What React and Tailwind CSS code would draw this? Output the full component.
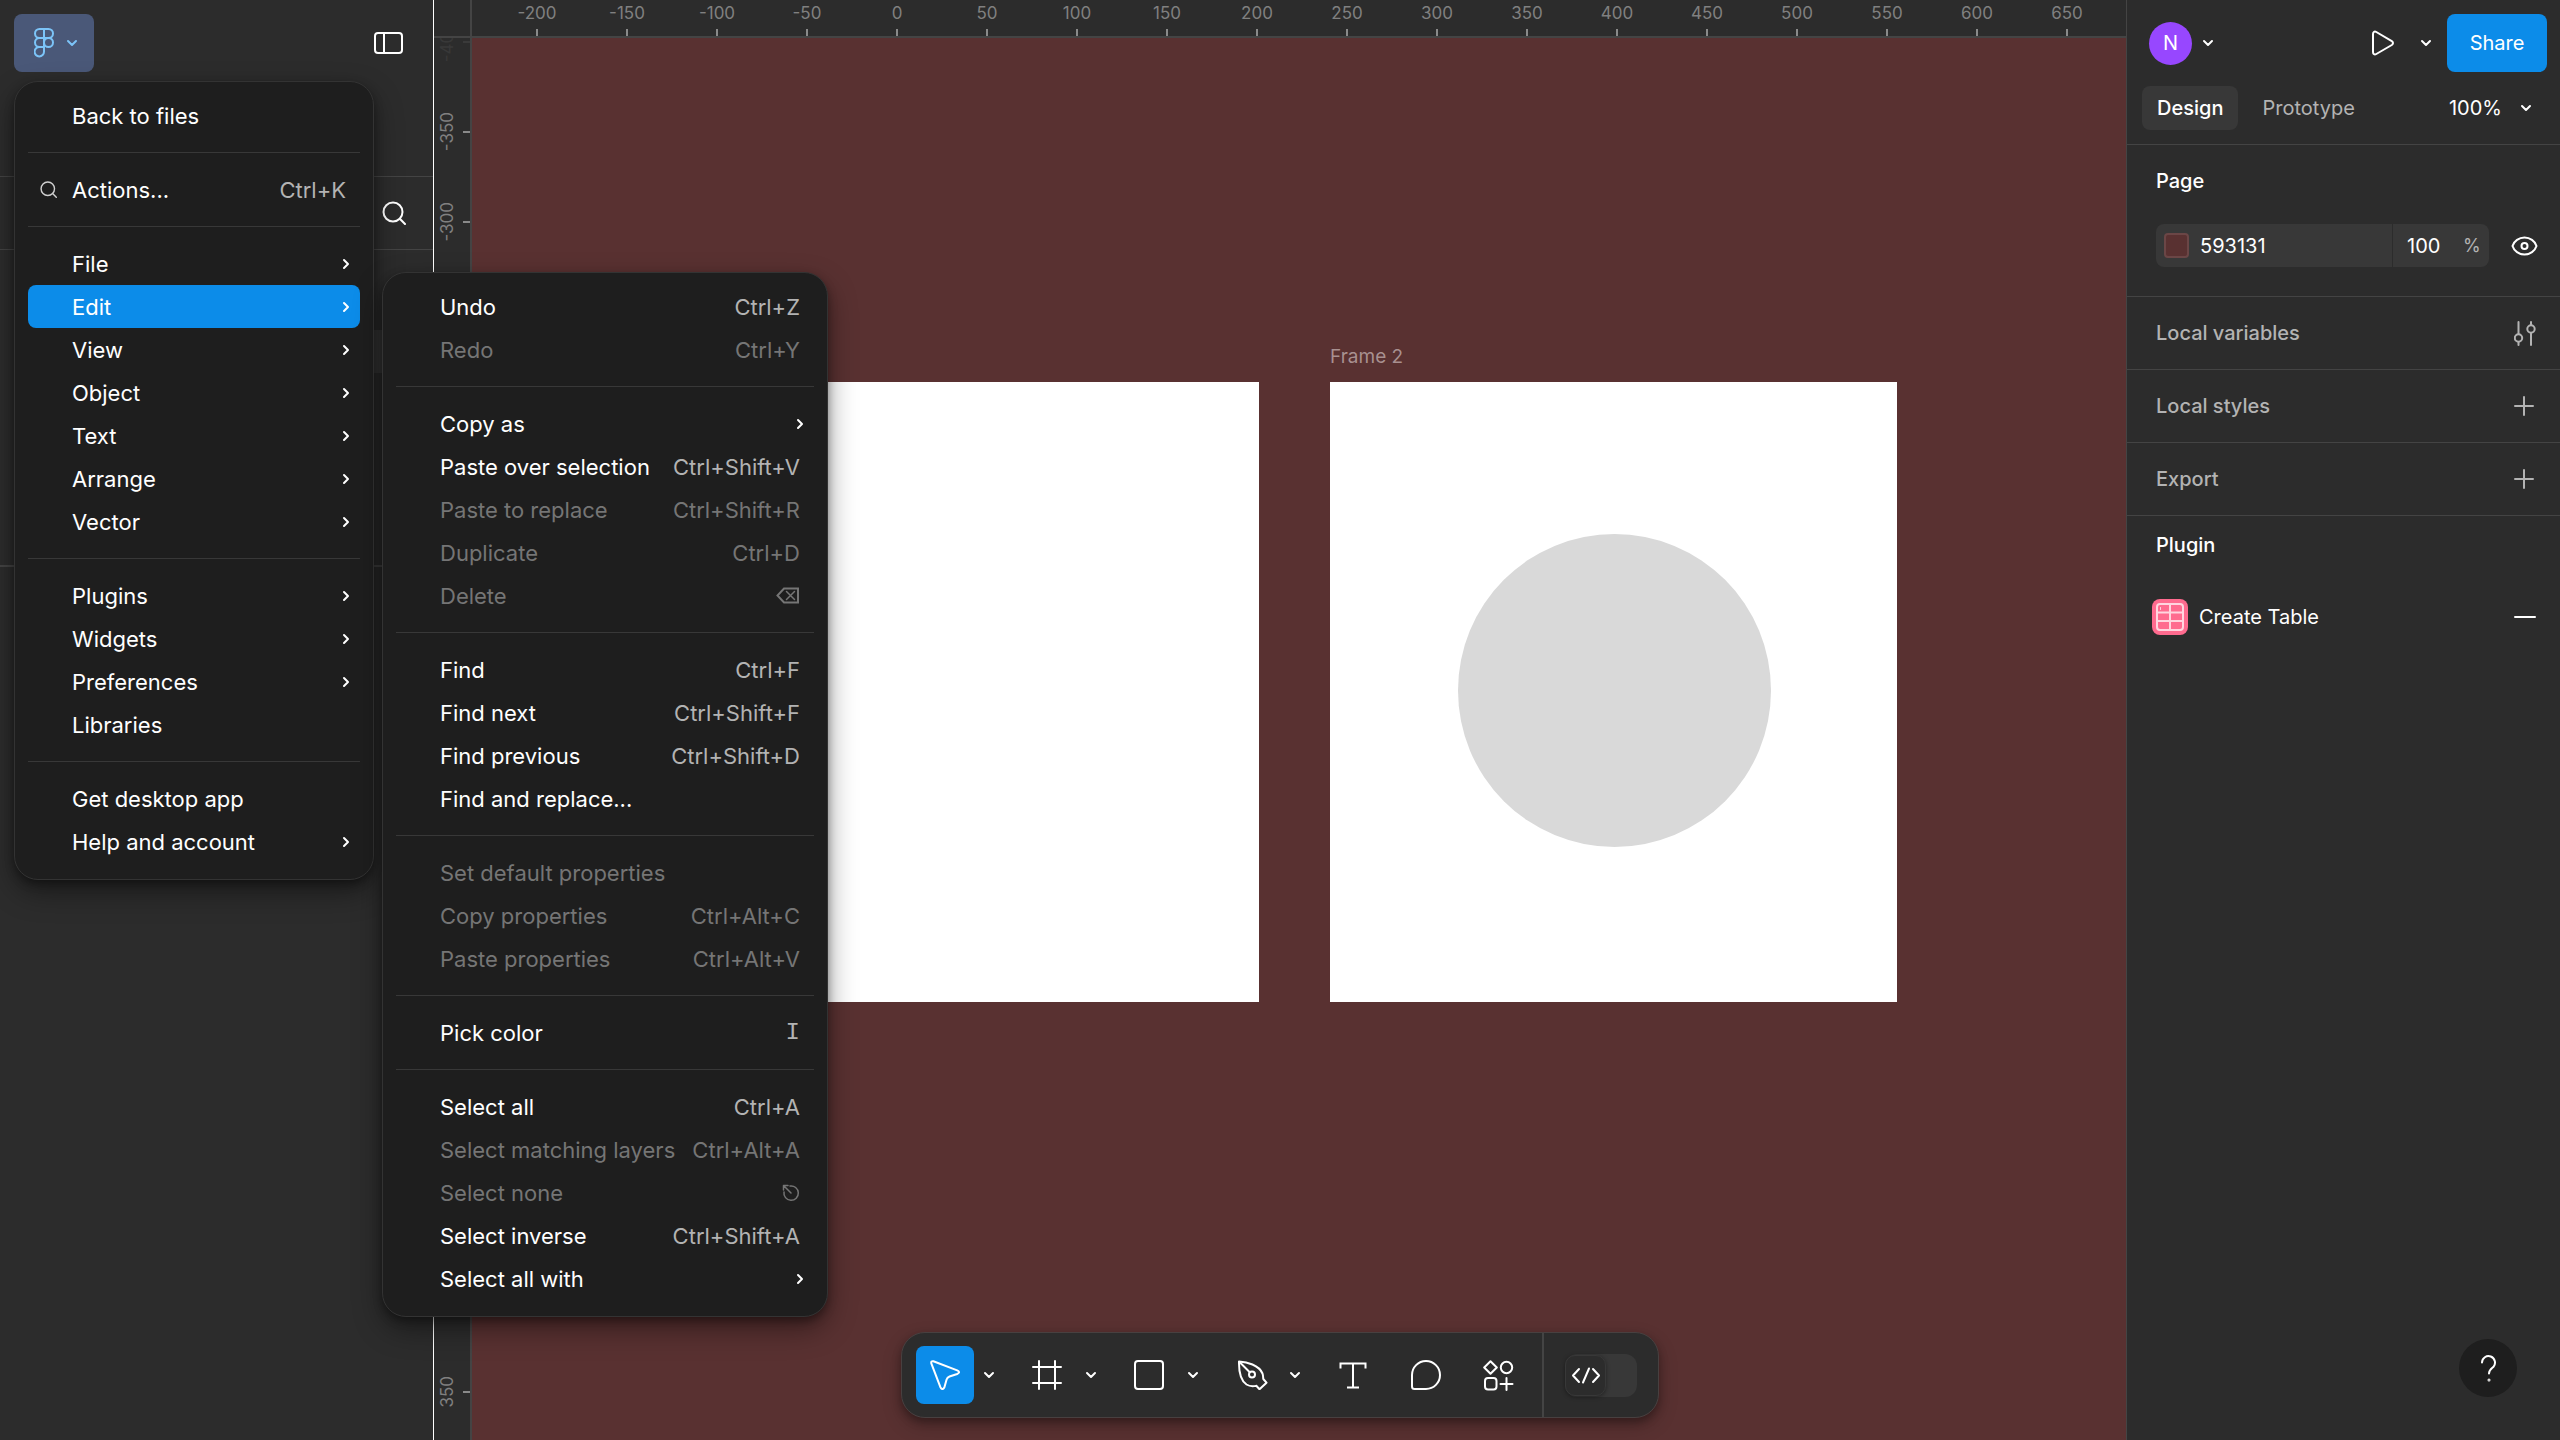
import React from 'react';

const Svg = ({ w, h, className = '', sw = 2, children }) => (
  <svg
    width={w}
    height={h}
    viewBox={`0 0 ${w} ${h}`}
    fill="none"
    stroke="currentColor"
    strokeWidth={sw}
    strokeLinecap="round"
    strokeLinejoin="round"
    aria-hidden="true"
    className={`shrink-0 ${className}`}
  >
    {children}
  </svg>
);

const ChevronDown = ({ className }) => (
  <Svg w={12} h={8} className={className}>
    <path d="M2 2l4 4 4-4" />
  </Svg>
);

const ChevronRight = () => (
  <Svg w={8} h={12}>
    <path d="M2 2l4 4-4 4" />
  </Svg>
);

const SearchIcon = ({ size }) => (
  <svg width={size} height={size} viewBox="0 0 24 24" fill="none" stroke="currentColor" strokeWidth="2" strokeLinecap="round" aria-hidden="true">
    <circle cx="11" cy="11" r="9.5" />
    <path d="M17.8 17.8L23 23" />
  </svg>
);

const BackspaceIcon = () => (
  <Svg w={24} h={17} sw={2}>
    <path d="M8 1.500h14v14H8L1.500 8.500z" strokeLinejoin="miter" />
    <path d="M10.500 4.500l8 8M18.500 4.500l-8 8" strokeWidth="1.500" />
  </Svg>
);

const EscapeIcon = () => (
  <Svg w={18} h={18} sw={1.5}>
    <path d="M8 2a7.200 7.200 0 1 1-6 6" />
    <path d="M9 9L1.500 1.500M1.500 6V1.500H6" />
  </Svg>
);

const FigmaIcon = () => (
  <Svg w={20} h={30} sw={2}>
    <path d="M10 1H5.500a4.500 4.500 0 0 0 0 9H10z" />
    <path d="M10 1h4.500a4.500 4.500 0 0 1 0 9H10z" />
    <path d="M10 10H5.500a4.500 4.500 0 0 0 0 9H10z" />
    <circle cx="14.500" cy="14.500" r="4.500" />
    <path d="M10 19H5.500A4.700 4.700 0 1 0 10 23.700z" />
  </Svg>
);

const mainMenu = [
  [{ label: 'Back to files' }],
  [{ label: 'Actions...', keys: 'Ctrl+K', icon: true }],
  [
    { label: 'File', sub: true },
    { label: 'Edit', sub: true, active: true },
    { label: 'View', sub: true },
    { label: 'Object', sub: true },
    { label: 'Text', sub: true },
    { label: 'Arrange', sub: true },
    { label: 'Vector', sub: true },
  ],
  [
    { label: 'Plugins', sub: true },
    { label: 'Widgets', sub: true },
    { label: 'Preferences', sub: true },
    { label: 'Libraries' },
  ],
  [{ label: 'Get desktop app' }, { label: 'Help and account', sub: true }],
];

const editMenu = [
  [{ label: 'Undo', keys: 'Ctrl+Z' }, { label: 'Redo', keys: 'Ctrl+Y', off: true }],
  [
    { label: 'Copy as', sub: true },
    { label: 'Paste over selection', keys: 'Ctrl+Shift+V' },
    { label: 'Paste to replace', keys: 'Ctrl+Shift+R', off: true },
    { label: 'Duplicate', keys: 'Ctrl+D', off: true },
    { label: 'Delete', keys: <BackspaceIcon />, off: true },
  ],
  [
    { label: 'Find', keys: 'Ctrl+F' },
    { label: 'Find next', keys: 'Ctrl+Shift+F' },
    { label: 'Find previous', keys: 'Ctrl+Shift+D' },
    { label: 'Find and replace...' },
  ],
  [
    { label: 'Set default properties', off: true },
    { label: 'Copy properties', keys: 'Ctrl+Alt+C', off: true },
    { label: 'Paste properties', keys: 'Ctrl+Alt+V', off: true },
  ],
  [{ label: 'Pick color', keys: <span className="font-['Liberation_Mono'] text-2xl">I</span> }],
  [
    { label: 'Select all', keys: 'Ctrl+A' },
    { label: 'Select matching layers', keys: 'Ctrl+Alt+A', off: true },
    { label: 'Select none', keys: <EscapeIcon />, off: true },
    { label: 'Select inverse', keys: 'Ctrl+Shift+A' },
    { label: 'Select all with', sub: true },
  ],
];

function MenuItem({ item }) {
  const tone = item.off ? 'text-[#757575]' : 'text-white';
  const keyTone = item.off ? 'text-[#757575]' : 'text-[#b3b3b3]';
  return (
    <button
      type="button"
      role="menuitem"
      disabled={item.off}
      className={`flex h-[43px] w-full items-center rounded-lg text-left whitespace-nowrap ${tone} ${item.active ? 'bg-[#0c8ce9]' : ''}`}
    >
      <span className="flex w-11 shrink-0 items-center pl-3 text-[#d0d0d0]">{item.icon && <SearchIcon size={17} />}</span>
      <span className="flex-1">{item.label}</span>
      {item.keys && <span className={`flex items-center pr-[14px] ${keyTone}`}>{item.keys}</span>}
      {item.sub && (
        <span className="pr-[10px]">
          <ChevronRight />
        </span>
      )}
    </button>
  );
}

function Menu({ groups, label, className }) {
  return (
    <div
      role="menu"
      aria-label={label}
      className={`absolute rounded-3xl border border-[#333] bg-[#1e1e1e] px-[13px] pt-3 pb-4 text-[22px] shadow-[0_4px_9px_rgba(0,0,0,0.35),0_12px_29px_rgba(0,0,0,0.4)] ${className}`}
    >
      {groups.map((group, i) => (
        <React.Fragment key={i}>
          {i > 0 && <hr className="my-[15px] border-[#383838]" />}
          {group.map((item) => (
            <MenuItem key={item.label} item={item} />
          ))}
        </React.Fragment>
      ))}
    </div>
  );
}

function LeftPanel() {
  return (
    <aside className="flex w-[434px] shrink-0 flex-col border-r border-white bg-[#2c2c2c]">
      <div className="flex h-[177px] items-start justify-between border-b border-[#444] pt-[14px] pr-[30px] pl-[14px]">
        <button type="button" aria-label="Main menu" className="flex h-[58px] w-20 items-center gap-3 rounded-lg bg-[#4a5878] pl-5 text-[#7cc4f8]">
          <FigmaIcon />
          <ChevronDown />
        </button>
        <button type="button" aria-label="Toggle sidebar" className="mt-[18px] text-white">
          <Svg w={29} h={22}>
            <rect x="1" y="1" width="27" height="20" rx="3" />
            <path d="M10 1v20" />
          </Svg>
        </button>
      </div>
      <div className="flex h-[73px] items-center justify-end border-b border-[#444] pr-[27px]">
        <button type="button" aria-label="Find" className="text-white">
          <SearchIcon size={24} />
        </button>
      </div>
      <div className="h-[317px] border-b-2 border-[#444] px-[14px] pt-20">
        <div className="h-[43px] rounded-lg bg-[#383838]" />
      </div>
    </aside>
  );
}

const xTicks = Array.from({ length: 18 }, (_, i) => i * 50 - 200);
const yTicks = Array.from({ length: 16 }, (_, i) => i * 50 - 400);

function Canvas() {
  return (
    <main className="flex min-w-0 flex-1 flex-col overflow-hidden text-[17px] leading-5 text-[#808080]">
      <div className="flex h-[38px] shrink-0 border-b-2 border-[#444] bg-[#2c2c2c]">
        <div className="w-[38px] shrink-0 border-r-2 border-[#444]" />
        <div className="flex min-w-0 flex-1 overflow-hidden pl-5">
          {xTicks.map((n) => (
            <div key={n} className="flex w-[90px] shrink-0 flex-col items-center justify-between pt-[3px]">
              <span>{n}</span>
              <span className="h-[7px] w-[2px] bg-[#8a8a8a]" />
            </div>
          ))}
        </div>
      </div>
      <div className="flex min-h-0 flex-1">
        <div className="w-[38px] shrink-0 overflow-hidden border-r-2 border-[#444] bg-[#2c2c2c]">
          <div className="-mt-[41px]">
            {yTicks.map((n) => (
              <div key={n} className={`flex h-[90px] items-center justify-between pl-[3px] ${n === -400 ? 'opacity-15' : ''}`}>
                <span className="rotate-180 [writing-mode:vertical-rl]">{n}</span>
                <span className="h-[2px] w-[7px] bg-[#8a8a8a]" />
              </div>
            ))}
          </div>
        </div>
        <div className="relative min-w-0 flex-1 overflow-hidden bg-[#593131]">
          <div className="absolute top-[344px] left-[220px] h-[620px] w-[567px] bg-white" />
          <div className="absolute top-[309px] left-[858px] text-[19px] leading-5 text-[#a89090]">Frame 2</div>
          <div className="absolute top-[344px] left-[858px] h-[620px] w-[567px] bg-white">
            <div className="absolute top-[152px] left-32 size-[313px] rounded-full bg-[#d9d9d9]" />
          </div>
        </div>
      </div>
    </main>
  );
}

const Plus = () => (
  <Svg w={20} h={20} sw={2}>
    <path d="M10 1v18M1 10h18" />
  </Svg>
);

const Sliders = () => (
  <Svg w={22} h={25} sw={2}>
    <path d="M4.500 1v12M4.500 21v3M17 1v3M17 12v12" />
    <circle cx="4.500" cy="17" r="3.700" />
    <circle cx="17" cy="8" r="3.700" />
  </Svg>
);

function SideRow({ label, action, pr, children }) {
  return (
    <div className={`flex h-[73px] items-center justify-between border-b border-[#444] pl-[29px] font-medium text-[#b3b3b3] ${pr}`}>
      <h2>{label}</h2>
      <button type="button" aria-label={action}>{children}</button>
    </div>
  );
}

function RightPanel() {
  return (
    <aside className="flex w-[434px] shrink-0 flex-col border-l border-[#444] bg-[#2c2c2c] text-white">
      <div className="flex h-[86px] items-center pr-[13px] pl-[22px]">
        <button type="button" aria-label="Account" className="flex items-center gap-[10px]">
          <span className="flex size-[43px] items-center justify-center rounded-full bg-[#9747ff]">N</span>
          <ChevronDown />
        </button>
        <button type="button" aria-label="Present" className="mr-[25px] ml-auto">
          <Svg w={24} h={26}>
            <path d="M2 4v18c0 2.300 1.600 3 3.300 2l15.500-9c1.600-1 1.600-2.800 0-3.800L5.300 2C3.600 1 2 1.700 2 4z" />
          </Svg>
        </button>
        <button type="button" aria-label="Present options" className="mr-[15px]">
          <ChevronDown />
        </button>
        <button type="button" className="h-[58px] w-[100px] rounded-lg bg-[#0c8ce9]">Share</button>
      </div>
      <div className="flex h-[59px] items-start border-b border-[#444] pr-7 pl-[15px]">
        <button type="button" className="h-11 rounded-lg bg-[#383838] px-[15px] font-medium">Design</button>
        <button type="button" className="h-11 px-6 text-[#b3b3b3]">Prototype</button>
        <button type="button" className="ml-auto flex h-11 items-center gap-[18px]">
          100%
          <ChevronDown />
        </button>
      </div>
      <section className="h-[152px] border-b border-[#444] pl-[29px]">
        <h2 className="flex h-[79px] items-center pb-[7px] font-medium">Page</h2>
        <div className="flex items-center">
          <div className="flex h-[43px] w-[333px] items-center rounded-lg bg-[#383838]">
            <span className="ml-2 size-[25px] shrink-0 rounded border-2 border-[#6b4646] bg-[#593131]" />
            <input aria-label="Page color" defaultValue="593131" className="ml-[11px] w-48 min-w-0 bg-transparent outline-none" />
            <span className="h-[43px] w-px shrink-0 bg-[#2c2c2c]" />
            <input aria-label="Page opacity" defaultValue="100" className="ml-[14px] w-14 min-w-0 bg-transparent outline-none" />
            <span className="text-lg text-[#b3b3b3]">%</span>
          </div>
          <button type="button" aria-label="Toggle visibility" className="ml-[22px]">
            <Svg w={27} h={20}>
              <path d="M1.500 10C3 5 8 1.500 13.500 1.500S24 5 25.500 10C24 15 19 18.500 13.500 18.500S3 15 1.500 10z" />
              <circle cx="13.500" cy="10" r="3" />
            </Svg>
          </button>
        </div>
      </section>
      <SideRow label="Local variables" action="Open variables" pr="pr-6">
        <Sliders />
      </SideRow>
      <SideRow label="Local styles" action="Create style" pr="pr-[26px]">
        <Plus />
      </SideRow>
      <SideRow label="Export" action="Add export setting" pr="pr-[26px]">
        <Plus />
      </SideRow>
      <h2 className="flex h-[58px] items-center pl-[29px] font-medium">Plugin</h2>
      <div className="flex h-[86px] items-center pr-[23px] pl-[25px]">
        <Svg w={36} h={36} sw={2} className="text-[#ffd5df]">
          <rect width="36" height="36" rx="8" fill="#ff6b8f" stroke="none" />
          <rect x="5" y="5" width="26" height="26" rx="3" />
          <path d="M18 5v26M5 13.500h26M5 22h26" />
          <path d="M8.500 8.500v2" strokeWidth="1" />
        </Svg>
        <span className="ml-[11px] flex-1">Create Table</span>
        <button type="button" aria-label="Remove plugin">
          <Svg w={24} h={4}>
            <path d="M2 2h20" />
          </Svg>
        </button>
      </div>
    </aside>
  );
}

const tools = [
  {
    name: 'Move',
    active: true,
    menu: true,
    icon: (
      <Svg w={30} h={30}>
        <path d="M3.400 1.300L27.200 10.400Q31 12.300 27.200 14L19.500 16.500Q17.200 17.300 16.600 19.500L14.400 27.200Q12.500 31 10.400 27.200L1.300 3.400Q.8.800 3.400 1.300z" />
      </Svg>
    ),
  },
  {
    name: 'Frame',
    menu: true,
    icon: (
      <Svg w={30} h={30}>
        <path d="M7 1v28M23 1v28M1 7h28M1 23h28" />
      </Svg>
    ),
  },
  {
    name: 'Rectangle',
    menu: true,
    icon: (
      <Svg w={30} h={30}>
        <rect x="1" y="1" width="28" height="28" rx="3" />
      </Svg>
    ),
  },
  {
    name: 'Pen',
    menu: true,
    icon: (
      <Svg w={34} h={30}>
        <path d="M5 1.500C13 2 25 5 28.500 13.500C29.500 16.500 29 18 29.300 19L32.500 22.700L25.500 29.200L22.300 25.800C20 26.200 16.500 27 12.500 24.500C7.500 21 4.800 12 5 1.500z" />
        <path d="M5.500 2L15.500 12" />
        <circle cx="18" cy="14.500" r="3" />
      </Svg>
    ),
  },
  {
    name: 'Text',
    icon: (
      <Svg w={28} h={27}>
        <path d="M1.500 6.500V1.500h25v5M14 1.500v24M8 25.500h12" strokeLinecap="butt" strokeLinejoin="miter" />
      </Svg>
    ),
  },
  {
    name: 'Comment',
    icon: (
      <Svg w={30} h={30}>
        <path d="M1 15a14 14 0 1 1 14 14H3.500A2.500 2.500 0 0 1 1 26.500z" />
      </Svg>
    ),
  },
  {
    name: 'Actions',
    icon: (
      <Svg w={32} h={31}>
        <path d="M7.500 1.200L13.800 7.500 7.500 13.800 1.200 7.500z" />
        <circle cx="23.500" cy="7.500" r="5.700" />
        <rect x="2" y="18" width="11.500" height="11.500" rx="3" />
        <path d="M23.500 18v12M17.500 24h12" />
      </Svg>
    ),
  },
];

function Toolbar() {
  return (
    <div
      role="toolbar"
      aria-label="Tools"
      className="absolute bottom-[22px] left-1/2 flex h-[86px] -translate-x-1/2 items-center rounded-3xl border border-[#484040] bg-[#2c2c2c] pr-[21px] pl-[14px] text-white shadow-[0_4px_9px_rgba(0,0,0,0.3),0_8px_20px_rgba(0,0,0,0.2)]"
    >
      <div className="flex gap-[15px] pr-[14px]">
        {tools.map((t) => (
          <div key={t.name} className="flex">
            <button
              type="button"
              aria-label={t.name}
              className={`flex h-[58px] w-[58px] items-center justify-center rounded-lg ${t.active ? 'bg-[#0c8ce9]' : ''}`}
            >
              {t.icon}
            </button>
            {t.menu && (
              <button type="button" aria-label={`${t.name} options`} className="flex w-[29px] items-center justify-center">
                <ChevronDown />
              </button>
            )}
          </div>
        ))}
      </div>
      <div className="w-[2px] self-stretch bg-[#444]" />
      <label className="ml-[21px] flex h-[43px] w-[72px] items-center rounded-xl bg-[#383838]">
        <input type="checkbox" role="switch" aria-label="Dev Mode" className="sr-only" />
        <span className="flex h-[41px] w-[41px] items-center justify-center rounded-[10px] border border-[#383838] bg-[#2c2c2c] shadow-[0_1px_4px_rgba(0,0,0,0.4)]">
          <Svg w={30} h={17}>
            <path d="M8 2L2 8.500 8 15M22 2l6 6.500L22 15M18 1.500l-6 14" />
          </Svg>
        </span>
      </label>
    </div>
  );
}

export default function App() {
  return (
    <div className="relative flex h-screen w-full overflow-hidden bg-[#2c2c2c] font-[Inter,sans-serif] text-xl leading-7">
      <LeftPanel />
      <Canvas />
      <RightPanel />
      <Toolbar />
      <Menu groups={mainMenu} label="Main menu" className="top-[81px] left-[14px] w-[360px]" />
      <Menu groups={editMenu} label="Edit" className="top-[272px] left-[382px] w-[446px]" />
      <button
        type="button"
        aria-label="Help"
        className="absolute right-[43px] bottom-[43px] flex size-[58px] items-center justify-center rounded-full bg-[#1e1e1e] text-white"
      >
        <Svg w={17} h={27}>
          <path d="M2 7.500a6.500 6.500 0 1 1 11.500 4.300C11 14 9 15 9 18.500" />
          <circle cx="9" cy="25" r=".5" />
        </Svg>
      </button>
    </div>
  );
}
